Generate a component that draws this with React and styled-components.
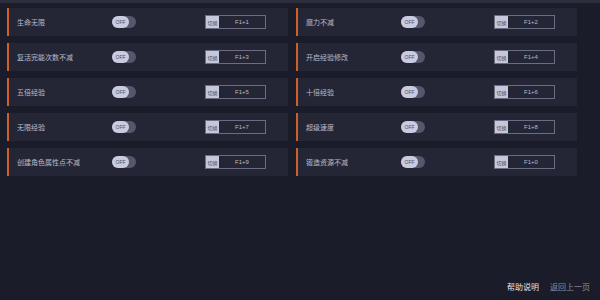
import React from 'react'
import styled, { createGlobalStyle } from 'styled-components'

const Global = createGlobalStyle`
  body {
    margin: 0;
    background: #1b1c29;
    font-family: "Noto Sans CJK SC", "Noto Sans", sans-serif;
  }
`

const Page = styled.div`
  width: 600px;
  height: 300px;
  display: flex;
  flex-direction: column;
  background: #1b1c29;
  border-top: 3px solid #2c2e3c;
  box-sizing: border-box;
  overflow: hidden;
`

const Grid = styled.div`
  display: grid;
  grid-template-columns: 281px 281px;
  grid-auto-rows: 28px;
  column-gap: 8px;
  row-gap: 7px;
  padding: 5px 0 0 7px;
`

const Row = styled.div`
  display: grid;
  grid-template-columns: 95px 93px 61px;
  align-items: center;
  background: #242636;
  border-left: 2px solid #d0602a;
  padding-left: 8px;
`

const Label = styled.span`
  font-size: 7px;
  color: #b9bccb;
  white-space: nowrap;
`

const Toggle = styled.div`
  width: 24px;
  height: 12px;
  border-radius: 6px;
  background: #55586b;
  display: flex;
`

const Knob = styled.div`
  width: 17px;
  height: 12px;
  border-radius: 6px;
  background: #c9cce0;
  color: #4a4d62;
  font-size: 5px;
  font-family: "Liberation Sans", sans-serif;
  display: flex;
  align-items: center;
  justify-content: center;
`

const Hotkey = styled.div`
  width: 61px;
  height: 14px;
  box-sizing: border-box;
  border: 1px solid #6b6e82;
  display: flex;
  align-items: stretch;
`

const KeyTag = styled.span`
  width: 13px;
  background: #c5c8da;
  color: #4a4d62;
  font-size: 5px;
  display: flex;
  align-items: center;
  justify-content: center;
`

const KeyText = styled.span`
  flex: 1;
  color: #b8bbc8;
  font-size: 6px;
  font-family: "Liberation Sans", sans-serif;
  display: flex;
  align-items: center;
  justify-content: center;
`

const Footer = styled.div`
  margin-top: auto;
  display: flex;
  justify-content: flex-end;
  gap: 11px;
  padding: 0 10px 8px 0;
`

const FooterLink = styled.span`
  font-size: 8px;
  color: ${p => (p.$dim ? '#8e90a0' : '#e2e3ea')};
`

const items = [
  ['生命无限', 'F1+1'],
  ['魔力不减', 'F1+2'],
  ['复活完能次数不减', 'F1+3'],
  ['开启经验修改', 'F1+4'],
  ['五倍经验', 'F1+5'],
  ['十倍经验', 'F1+6'],
  ['无限经验', 'F1+7'],
  ['超级速度', 'F1+8'],
  ['创建角色属性点不减', 'F1+9'],
  ['锻造资源不减', 'F1+0'],
]

export default function App() {
  return (
    <Page>
      <Global />
      <Grid>
        {items.map(([name, key]) => (
          <Row key={key}>
            <Label>{name}</Label>
            <Toggle>
              <Knob>OFF</Knob>
            </Toggle>
            <Hotkey>
              <KeyTag>切换</KeyTag>
              <KeyText>{key}</KeyText>
            </Hotkey>
          </Row>
        ))}
      </Grid>
      <Footer>
        <FooterLink>帮助说明</FooterLink>
        <FooterLink $dim>返回上一页</FooterLink>
      </Footer>
    </Page>
  )
}
